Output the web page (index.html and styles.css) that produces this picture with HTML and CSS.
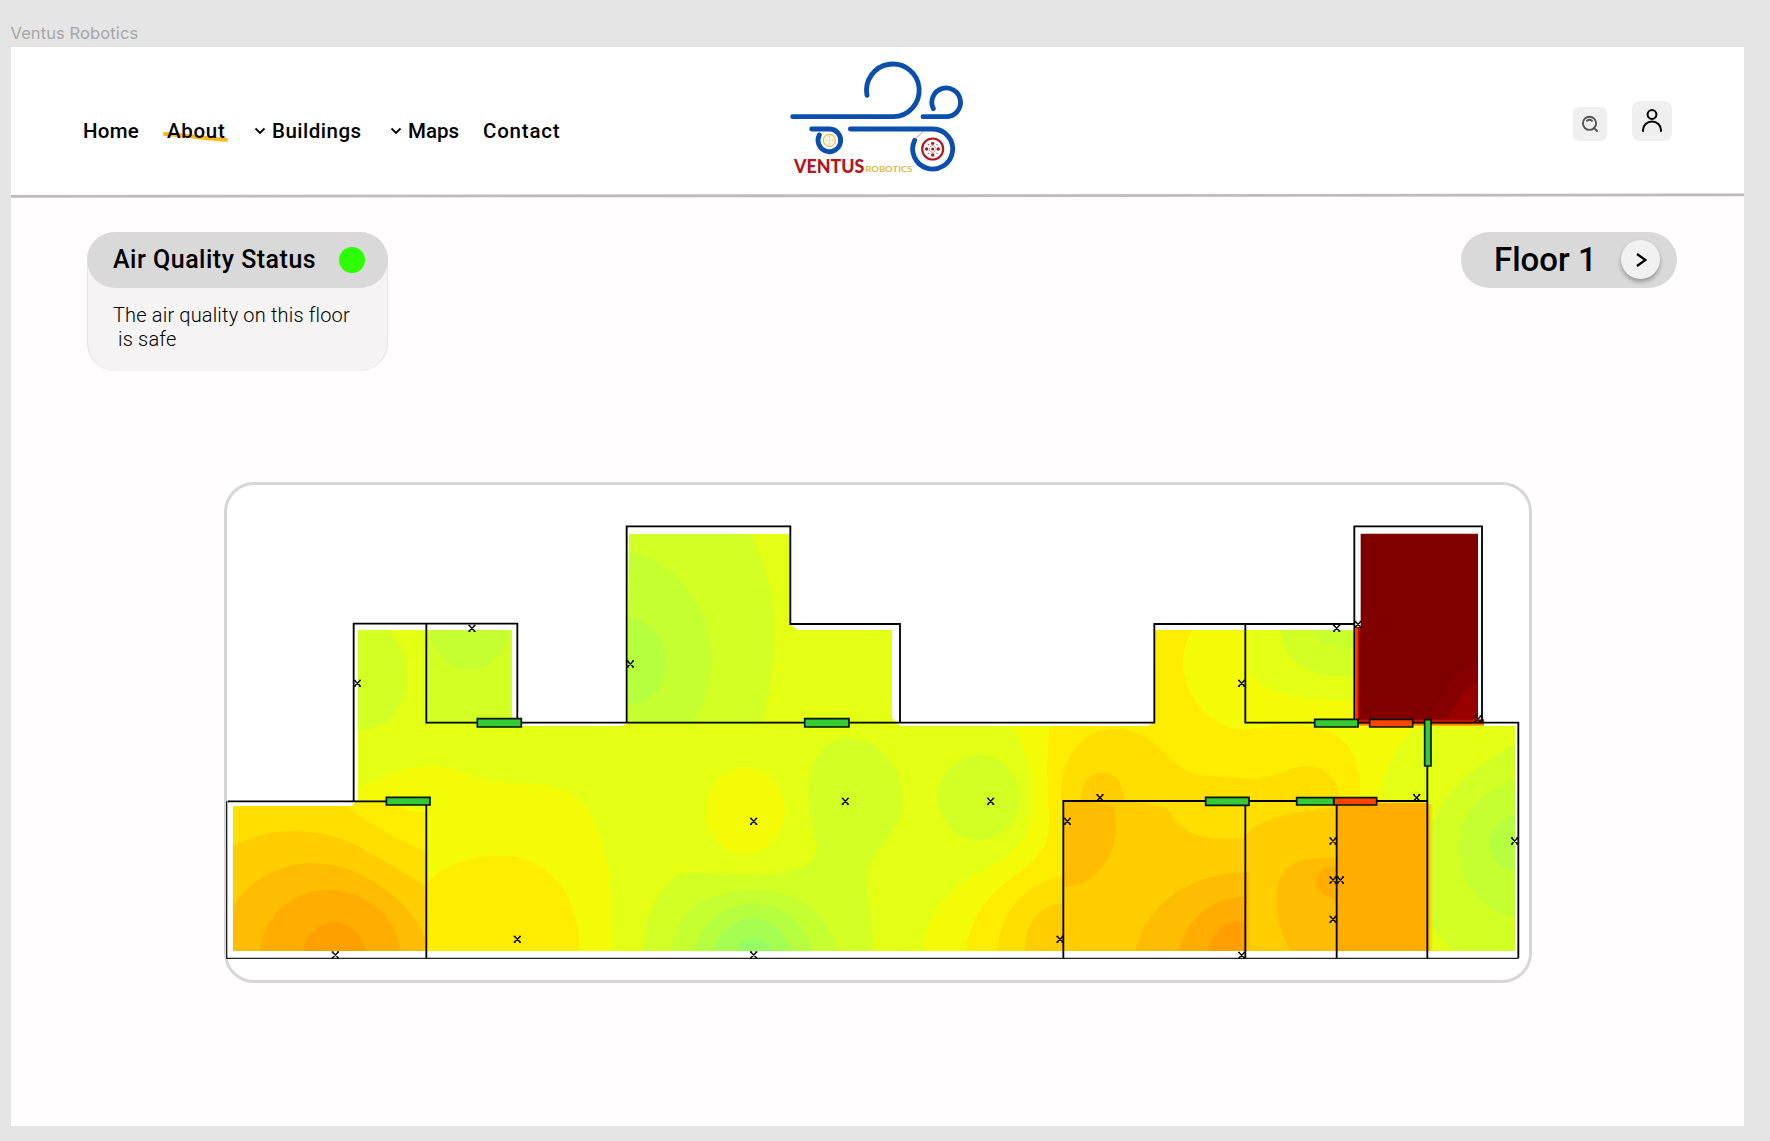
FILE: index.html
```html
<!DOCTYPE html>
<html lang="en">
<head>
<meta charset="utf-8">
<title>Ventus Robotics</title>
<link rel="stylesheet" href="styles.css">
</head>
<body>
<div class="frame-label">Ventus Robotics</div>
<div class="frame">
  <header class="header">
    <nav class="nav">
      <a class="nav-item home">Home</a>
      <a class="nav-item about">About
        <svg class="underline" width="68" height="12" viewBox="0 0 68 12"><path d="M3 3 C22 4 44 7.500 64 8.800" fill="none" stroke="#f9b916" stroke-width="4" stroke-linecap="round"/></svg>
      </a>
      <a class="nav-item buildings"><svg class="chevron" width="12" height="8" viewBox="0 0 12 8"><path d="M1.5 1.5 6 6 10.5 1.5"/></svg><span>Buildings</span></a>
      <a class="nav-item maps"><svg class="chevron" width="12" height="8" viewBox="0 0 12 8"><path d="M1.5 1.5 6 6 10.5 1.5"/></svg><span>Maps</span></a>
      <a class="nav-item contact">Contact</a>
    </nav>
    <svg class="logo" width="220" height="147" viewBox="0 6 660 441">
      <g fill="none" stroke="#0a4fae" stroke-width="14.500" stroke-linecap="round">
        <path d="M68 215H370A79 79 0 1 0 291 151"/>
        <path d="M459 215H528A43 43 0 1 0 490 191"/>
        <path d="M125 252H179A34 34 0 1 1 148 270"/>
        <path d="M241 252H489A60 60 0 1 1 434 286"/>
      </g>
      <path d="M438 280 460 259" stroke="#b3161c" stroke-width="1.5"/>
      <g fill="none" stroke="#e3bf45">
        <circle cx="178" cy="286" r="18" stroke-width="3.500"/>
        <circle cx="178" cy="286" r="11" stroke-width="2" stroke-dasharray="4 4.6"/>
        <path d="M178 272V300M164 286H192" stroke-width="1.5"/>
      </g>
      <circle cx="488" cy="312" r="31.500" fill="none" stroke="#b3161c" stroke-width="6.500"/>
      <circle cx="488" cy="312" r="10" fill="none" stroke="#b3161c" stroke-width="2" stroke-dasharray="4 2"/>
      <g fill="#b3161c">
        <circle cx="488" cy="312" r="4.500"/><circle cx="488" cy="295" r="5"/><circle cx="488" cy="330" r="5"/><circle cx="470" cy="312" r="5"/><circle cx="505" cy="312" r="5"/>
        <circle cx="475" cy="299" r="1.800"/><circle cx="501" cy="299" r="1.800"/><circle cx="475" cy="325" r="1.800"/><circle cx="501" cy="325" r="1.800"/>
      </g>
      <text class="logo-ventus" x="72" y="384" textLength="211" lengthAdjust="spacingAndGlyphs">VENTUS</text>
      <text class="logo-robotics" x="286" y="381" textLength="141" lengthAdjust="spacingAndGlyphs">ROBOTICS</text>
    </svg>
    <div class="actions">
      <button class="icon-btn search" aria-label="Search">
        <svg width="18" height="18" viewBox="0 0 18 18" fill="none" stroke="#555" stroke-width="1.900" stroke-linecap="round"><circle cx="8.500" cy="8.300" r="6.600"/><path d="M13.300 13.200 16 16M6 5.800Q8.500 3.800 11 5.800"/></svg>
      </button>
      <button class="icon-btn user" aria-label="Account">
        <svg width="22" height="24" viewBox="0 0 22 24" fill="none" stroke="#000" stroke-width="2" stroke-linecap="round"><circle cx="11" cy="5.500" r="4.400"/><path d="M2 22V21A9 8.600 0 0 1 20 21V22"/></svg>
      </button>
    </div>
  </header>
  <svg class="rule" width="1733" height="6" viewBox="0 0 1733 6"><path d="M0 2 1733 .5V3.300L0 4.800Z" fill="#bdbbbc"/></svg>

  <main class="content">
    <div class="toolbar">
      <section class="status">
        <div class="status-head"><span class="status-title">Air Quality Status</span><i class="dot"></i></div>
        <p class="status-text"><span class="line one">The air quality on this floor</span><span class="line two">is safe</span></p>
      </section>
      <div class="floor">
        <span class="floor-name">Floor 1</span>
        <button class="next" aria-label="Next floor"><svg width="12" height="16" viewBox="0 0 12 16"><path d="M2 2 10.500 8 2 14" fill="none" stroke="#000" stroke-width="2.300"/></svg></button>
      </div>
    </div>

    <section class="map-card">
      <svg class="map" viewBox="51 45 3906 1485">
        <defs>
          <clipPath id="floor"><path d="M444 480H906V745L923 768H1235L1253 760 1257 192H1740V463L1763 480H2046V745L2070 768H2815L2833 758 2837 480H3433V768H3915V1443H69V1008H425L444 990Z"/></clipPath>
          <linearGradient id="bleed"><stop offset="0" stop-color="#ffae00"/><stop offset="1" stop-color="#ffae00" stop-opacity="0"/></linearGradient>
          <linearGradient id="hot" x2="0" y2="1"><stop offset="0" stop-color="#b00000"/><stop offset=".5" stop-color="#ff3000"/><stop offset="1" stop-color="#ffc000"/></linearGradient>
          <linearGradient id="hotside"><stop offset="0" stop-color="#ff9a00"/><stop offset=".6" stop-color="#ff2000"/><stop offset="1" stop-color="#900000"/></linearGradient>
          <path id="x" d="M-9-9 9 9M9-9-9 9M-11-9H-5M5-9H11M-11 9H-5M5 9H11"/>
        </defs>
        <g clip-path="url(#floor)">
          <rect x="51" y="100" width="3900" height="1400" fill="#e3ff14"/>
          <!-- west rooms -->
          <path fill="#d2ff24" d="M444 480H530C575 520 590 570 590 625 590 710 540 775 444 780Z"/>
          <path fill="#d2ff24" d="M649 480H906V758H649Z"/>
          <path fill="#c6ff30" d="M658 480C670 550 710 598 780 598 840 598 885 550 900 480Z"/>
          <path fill="#f3fc06" d="M420 968C520 910 590 888 665 888 750 888 790 940 960 942 1080 945 1140 990 1170 1100 1200 1200 1208 1240 1206 1443H649V1010H420Z"/>
          <path fill="#feed00" d="M649 1240C700 1185 780 1157 870 1157 1010 1157 1110 1270 1108 1443H649Z"/>
          <path fill="#ffde00" d="M69 1008H649V1443H69Z"/>
          <path fill="#feed00" d="M400 994H649V1145C560 1110 480 1060 400 1005Z"/>
          <path fill="#f3fc06" d="M550 994H649V1028C610 1028 580 1018 550 1000Z"/>
          <path fill="#ffcd00" d="M69 1128Q160 1083 245 1083C370 1083 430 1120 500 1160 570 1200 620 1230 649 1252V1443H69Z"/>
          <path fill="#ffbd00" d="M69 1310C120 1230 210 1179 312 1179 450 1179 600 1290 649 1410V1443H69Z"/>
          <path fill="#ffae00" d="M149 1443C165 1330 250 1260 352 1260 470 1260 560 1340 571 1443Z"/>
          <path fill="#ff9f00" d="M280 1443C290 1390 325 1358 373 1358 420 1358 455 1390 467 1443Z"/>
          <!-- central hall -->
          <g transform="translate(1170)">
            <path fill="#d2ff24" d="M80 192H450C505 300 525 400 524 500 520 600 505 680 485 758H80Z"/>
            <path fill="#c6ff30" d="M80 243C230 265 333 420 333 560 330 640 315 700 280 758H80Z"/>
            <path fill="#b6ff3e" d="M80 448C150 450 197 500 197 580 197 650 150 705 80 703Z"/>
            <ellipse fill="#f3fc06" cx="435" cy="1022" rx="119" ry="130"/>
            <path fill="#d2ff24" d="M128 1443C135 1330 180 1240 240 1215 300 1200 400 1220 500 1212 600 1205 650 1180 650 1130 650 1100 630 1070 625 975 625 870 670 805 745 805 850 810 908 900 908 990 905 1100 800 1150 800 1220 798 1290 818 1340 820 1443Z"/>
            <path fill="#c6ff30" d="M212 1443C230 1330 300 1262 460 1262 610 1262 690 1340 710 1443Z"/>
            <path fill="#b6ff3e" d="M282 1443C310 1340 380 1303 460 1303 550 1303 615 1350 634 1443Z"/>
            <path fill="#a6ff50" d="M340 1443C370 1370 410 1345 460 1345 510 1345 555 1380 575 1443Z"/>
            <path fill="#98ff60" d="M410 1443C420 1410 440 1403 460 1403 490 1403 505 1420 510 1443Z"/>
            <ellipse fill="#d2ff24" cx="1136" cy="983" rx="123" ry="127"/>
          </g>
          <!-- east hall -->
          <g transform="translate(2310 330)">
            <path fill="#f3fc06" d="M95 438C150 520 160 600 155 680 150 770 110 815 30 860-40 890-160 960-172 1113H1205V660C1205 570 1250 480 1330 430H796V150H520V430Z"/>
            <path fill="#feed00" d="M208 438C200 520 200 600 208 720 210 800 170 840 100 890 20 950-30 1010-42 1113H900L1140 700V660C1145 560 1120 490 1050 455 980 425 860 440 800 448 740 450 680 420 640 350 600 290 600 220 635 150H500V438Z"/>
            <path fill="#ffde00" d="M243 662C240 540 300 447 405 447 500 447 540 510 580 545 640 600 700 585 820 597 900 590 930 560 980 558 1040 560 1075 600 1080 662Z"/>
            <path fill="#ffde00" d="M54 1113C60 990 130 920 250 885V1113Z"/>
            <path fill="#ffcd00" d="M137 1113C135 1040 170 975 250 970V1113ZM303 662C303 610 330 578 367 578 405 578 433 610 433 662Z"/>
            <path fill="#ffcd00" d="M250 662H796V1113H250Z"/>
            <path fill="#ffde00" d="M480 662H796V776H720C640 775 590 745 560 682L480 668Z"/>
            <path fill="#ffbd00" d="M250 662H320L402 680C415 750 405 800 380 840 350 890 310 920 250 920Z"/>
            <path fill="#ffbd00" d="M468 1113C490 1000 600 880 796 878V1113Z"/>
            <path fill="#ffae00" d="M597 1113C620 1010 700 950 796 950V1113Z"/>
            <path fill="#ff9f00" d="M684 1113C695 1060 730 1020 796 1022V1113Z"/>
          </g>
          <g transform="translate(3090 90)">
            <path fill="#f3fc06" d="M16 390H343V668H16Z"/>
            <path fill="#e3ff14" d="M25 390V515C80 580 160 602 343 600V390Z"/>
            <path fill="#d2ff24" d="M118 390C130 470 190 527 290 527H343V390Z"/>
            <path fill="#c9ff2c" d="M215 390C230 430 270 447 343 440V390Z"/>
            <path fill="#ffcd00" d="M16 903H290V1353H16Z"/>
            <path fill="#ffde00" d="M16 903H290V915C240 940 180 925 100 955 60 970 30 985 16 1010Z"/>
            <path fill="#ffbd00" d="M152 1353C110 1290 105 1200 115 1160 130 1090 180 1070 290 1075V1353Z"/>
            <path fill="#ffae00" d="M290 1100C250 1095 228 1120 228 1145 228 1175 260 1190 290 1200Z"/>
            <path fill="#ffae00" d="M290 908H565V1353H290Z"/>
            <path fill="#d2ff24" d="M825 735C700 790 600 900 570 980V1270C590 1310 620 1330 640 1353H825Z"/>
            <path fill="#c6ff30" d="M825 842C720 870 655 950 655 1040 655 1150 720 1230 825 1253Z"/>
            <path fill="#b6ff3e" d="M825 942C780 960 750 990 750 1030 750 1075 780 1110 825 1113Z"/>
            <rect x="562" y="912" width="18" height="441" fill="url(#bleed)"/>
            <rect x="16" y="1115" width="16" height="238" fill="url(#bleed)"/>
          </g>
        </g>
        <g transform="translate(3090 90)">
          <path fill="#800000" d="M362 101H714V668H345V380H362Z"/>
          <path fill="#870000" d="M714 480C640 520 590 580 572 668H714Z"/>
          <path fill="#980000" d="M714 545C670 570 635 620 622 668H714Z"/>
          <rect x="343" y="382" width="15" height="286" fill="url(#hotside)"/>
          <rect x="350" y="658" width="382" height="20" fill="url(#hot)"/>
        </g>
        <g fill="none" stroke="#000" stroke-width="5.500">
          <path d="M53 994H649M431 994V461H922V758M649 461V758H2833V462H3433M649 994V1465M1250 758V169H1741V462H2070V758M3106 462V758H3925V1465M3433 758V169H3816V758M2560 1465V993H3652M3106 993V1465M3380 993V1465M3652 758V1465"/>
          <path d="M50 994V1465H3925" stroke-width="4" stroke="#222"/>
        </g>
        <g fill="#35cb36" stroke="#04140a" stroke-width="5">
          <path d="M802 746H934V771H802ZM529 982H660V1005H529ZM1784 746H1917V771H1784ZM2987 982H3117V1006H2987ZM3314 748H3444V771H3314ZM3644 749H3663V888H3644ZM3260 983H3371V1005H3260Z"/>
          <path fill="#ff4400" d="M3479 748H3608V771H3479ZM3372 983H3500V1005H3372Z"/>
        </g>
        <g stroke="#000" stroke-width="4">
          <use href="#x" x="786" y="475"/><use href="#x" x="442" y="640"/><use href="#x" x="922" y="1408"/><use href="#x" x="376" y="1455"/>
          <use href="#x" x="1261" y="582"/><use href="#x" x="1906" y="994"/><use href="#x" x="1631" y="1054"/><use href="#x" x="2342" y="994"/><use href="#x" x="1631" y="1455"/>
          <use href="#x" x="3095" y="640"/><use href="#x" x="2670" y="983"/><use href="#x" x="2572" y="1054"/><use href="#x" x="2550" y="1408"/><use href="#x" x="3095" y="1456"/>
          <use href="#x" x="3380" y="475"/><use href="#x" x="3444" y="463"/><use href="#x" x="3804" y="747"/><use href="#x" x="3620" y="983"/><use href="#x" x="3369" y="1113"/><use href="#x" x="3914" y="1113"/><use href="#x" x="3369" y="1230"/><use href="#x" x="3391" y="1230"/><use href="#x" x="3369" y="1348"/>
        </g>
      </svg>
    </section>
  </main>
</div>
</body>
</html>
```
FILE: styles.css
```css
* { box-sizing: border-box; }
body {
  margin: 0;
  height: 1141px;
  overflow: hidden;
  background: #e5e5e5;
  font-family: Roboto, "Liberation Sans", sans-serif;
  color: #000;
}
button { border: 0; padding: 0; }
svg { display: block; }
.frame-label {
  height: 47px;
  padding: 21px 0 0 10.5px;
  font: 400 16.5px/24px Inter, sans-serif;
  letter-spacing: .1px;
  color: #a6a6a6;
}
.frame {
  width: 1733px;
  height: 1079px;
  margin-left: 11px;
  background: #fffdfe;
}
.header {
  display: grid;
  grid-template-columns: 759px 220px 1fr;
  height: 146px;
  background: #fff;
}
.nav {
  display: flex;
  align-items: flex-start;
  padding: 72px 0 0 72px;
  font-size: 20.5px;
  font-weight: 500;
  line-height: 24px;
}
.nav-item { display: flex; align-items: center; white-space: nowrap; }
.home { width: 84px; letter-spacing: .25px; }
.about { position: relative; isolation: isolate; width: 87px; letter-spacing: .7px; }
.underline { position: absolute; left: -5px; top: 12px; z-index: -1; }
.buildings { width: 136px; gap: 6px; letter-spacing: .5px; }
.maps { width: 93px; gap: 6px; letter-spacing: 0; }
.contact { letter-spacing: .8px; }
.chevron { fill: none; stroke: #000; stroke-width: 1.8; }
.logo-ventus { font: 900 54px Lato, sans-serif; fill: #b3161c; }
.logo-robotics { font: 700 25px Lato, sans-serif; fill: #e0b93a; }
.actions {
  display: flex;
  justify-content: flex-end;
  align-items: flex-end;
  gap: 25px;
  padding: 0 72px 53px 0;
}
.icon-btn { display: grid; place-items: center; background: #efefef; }
.search { width: 34px; height: 34px; border-radius: 6px; }
.user { width: 40px; height: 40px; border-radius: 8px; }
.rule { background: linear-gradient(#fff 50%, #fffdfe 50%); }
.content { padding: 33px 67px 0 76px; }
.toolbar { display: flex; justify-content: space-between; align-items: flex-start; }
.status {
  width: 301px;
  height: 139px;
  border-radius: 28px;
  background: #f5f3f4;
  box-shadow: inset 1px 0 #e6e4e5, inset -1px 0 #e6e4e5;
}
.status-head {
  display: flex;
  align-items: center;
  justify-content: space-between;
  height: 55.5px;
  padding: 0 23px 0 26px;
  border-radius: 28px;
  background: #d9d9d9;
}
.status-title { font-size: 25px; font-weight: 500; letter-spacing: .5px; white-space: nowrap; }
.dot { width: 26px; height: 26px; border-radius: 50%; background: #2bff00; }
.status-text { margin: 15.5px 0 0 26px; font-size: 20px; font-weight: 300; line-height: 24px; }
.line { display: block; white-space: nowrap; }
.one { letter-spacing: .17px; }
.two { padding-left: 5px; letter-spacing: .2px; }
.floor {
  display: flex;
  align-items: center;
  justify-content: space-between;
  width: 216px;
  height: 55.5px;
  padding: 0 17px 0 33px;
  border-radius: 28px;
  background: #d9d9d9;
}
.floor-name { font-size: 33px; font-weight: 500; white-space: nowrap; }
.next {
  display: grid;
  place-items: center;
  width: 39px;
  height: 39px;
  border-radius: 50%;
  background: #f1f1f1;
  box-shadow: 0 3px 4px rgba(0, 0, 0, .3);
}
.map-card {
  width: 1308px;
  height: 501px;
  margin: 111px 0 0 137px;
  border: 3px solid #d7d7d7;
  border-radius: 30px;
  background: #fff;
}
.map { width: 1302px; height: 495px; overflow: visible; }
```
